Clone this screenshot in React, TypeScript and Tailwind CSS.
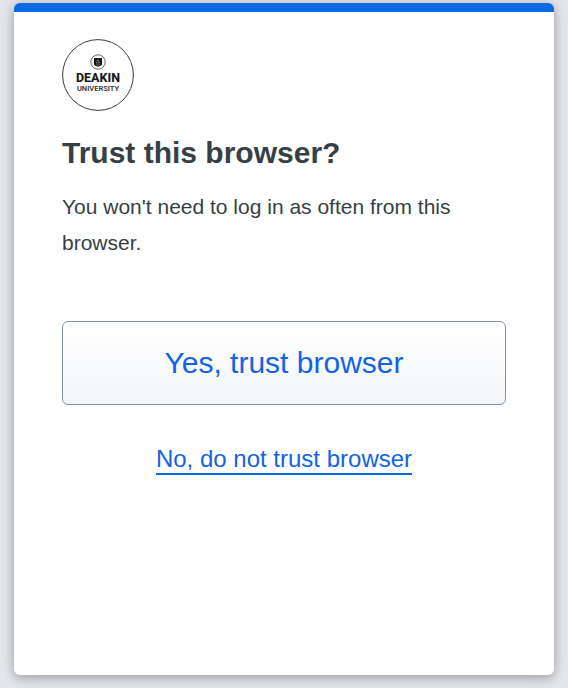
function DeakinLogo() {
  return (
    <svg viewBox="0 0 144 144" className="size-18" role="img" aria-label="Deakin University">
      <circle cx="72" cy="72" r="70.8" fill="#fff" stroke="#3c3c3c" strokeWidth="2" />

      {/* Crest */}
      <circle cx="72" cy="46" r="14.4" fill="#fff" stroke="#666" strokeWidth="2" />
      <path d="M64 38h16v12.5c0 2.6-3.2 3.6-8 5c-4.800-1.400-8-2.400-8-5z" fill="#161616" />
      <path
        d="M72 41l3.500 7h-7zM67.500 51l4.500 1.500l4.500-1.500"
        fill="none"
        stroke="#8a8a8a"
        strokeWidth="1.400"
      />

      <text
        x="72"
        y="86"
        textAnchor="middle"
        fill="#1c1c1c"
        className="font-[Roboto,sans-serif] text-[25px] font-extrabold"
      >
        DEAKIN
      </text>
      <text
        x="72"
        y="104"
        textAnchor="middle"
        fill="#333"
        className="font-[Roboto,sans-serif] text-[15px] font-semibold"
      >
        UNIVERSITY
      </text>
    </svg>
  );
}

export default function App() {
  return (
    <div className="flex min-h-screen bg-[#e4e5ea] px-3.5 pt-[3px] pb-[13px] font-['Liberation_Sans',Arial,sans-serif] text-[#363f46]">
      <main className="flex-1 overflow-hidden rounded-md border-t-9 border-[#0b69e3] bg-white px-12 pt-[27px] pb-12 shadow-[0_3px_10px_rgba(0,0,0,0.2),0_2px_14px_rgba(0,0,0,0.14)]">
        <DeakinLogo />

        <h1 className="mt-6 text-[30px] leading-9 font-bold">Trust this browser?</h1>
        <p className="mt-[18px] text-[21px] leading-9">
          You won't need to log in as often from this browser.
        </p>

        <button
          type="button"
          className="mt-15 h-21 w-full rounded-md border border-[#8592a2] bg-linear-to-b from-white to-[#f3f5f8] pb-0.5 text-[30px] text-[#1363e2]"
        >
          Yes, trust browser
        </button>

        <div className="mt-10 text-center text-[24px] leading-7">
          <a href="#" className="inline-block border-b-2 border-[#0b69e3] text-[#1363e2]">
            No, do not trust browser
          </a>
        </div>
      </main>
    </div>
  );
}
